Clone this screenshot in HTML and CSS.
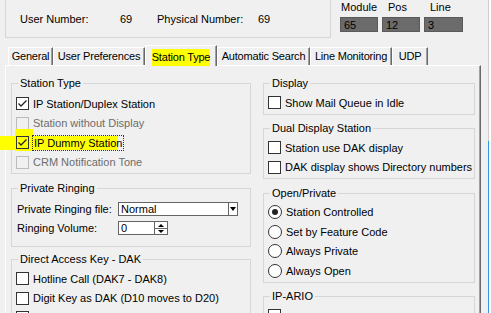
FILE: index.html
```html
<!DOCTYPE html>
<html>
<head>
<meta charset="utf-8">
<title>Station Type</title>
<link rel="stylesheet" href="styles.css">
</head>
<body>
<div class="window">

  <div class="head">
    <div class="ident">
      <span class="ident-lbl">User Number:</span><span class="ident-val">69</span>
      <span class="ident-lbl wide">Physical Number:</span><span class="ident-val">69</span>
    </div>
    <div class="slot">
      <div class="slot-col"><span class="slot-lbl first">Module</span><div class="slot-val">65</div></div>
      <div class="slot-col"><span class="slot-lbl">Pos</span><div class="slot-val">12</div></div>
      <div class="slot-col last"><span class="slot-lbl">Line</span><div class="slot-val">3</div></div>
    </div>
  </div>

  <div class="tabs">
    <div class="tab t-general">General</div>
    <div class="tab t-prefs">User Preferences</div>
    <div class="tab t-type active"><span class="marker">Station Type</span></div>
    <div class="tab t-search">Automatic Search</div>
    <div class="tab t-mon">Line Monitoring</div>
    <div class="tab t-udp">UDP</div>
  </div>

  <div class="panel">
    <div class="col col-left">

      <fieldset class="group g-station">
        <legend>Station Type</legend>
        <div class="row"><span class="check on"><svg viewBox="0 0 11 11"><polyline points="1.5,5.5 4,8 9.5,2.5"/></svg></span>IP Station/Duplex Station</div>
        <div class="row off"><span class="check"></span>Station without Display</div>
        <div class="row hl">
          <span class="hl-a"></span><span class="hl-b"></span>
          <span class="check on clear"><svg viewBox="0 0 11 11"><polyline points="1.5,5.5 4,8 9.5,2.5"/></svg></span><span class="focus">IP Dummy Station</span>
        </div>
        <div class="row off"><span class="check"></span>CRM Notification Tone</div>
      </fieldset>

      <fieldset class="group g-ring">
        <legend>Private Ringing</legend>
        <div class="row">
          <span class="field-lbl">Private Ringing file:</span>
          <div class="combo"><span class="combo-text">Normal</span><span class="combo-btn"><i class="tri down"></i></span></div>
        </div>
        <div class="row">
          <span class="field-lbl">Ringing Volume:</span>
          <div class="spin"><span class="spin-text">0</span><span class="spin-btns"><span class="spin-b"><i class="tri up"></i></span><span class="spin-b"><i class="tri down"></i></span></span></div>
        </div>
      </fieldset>

      <fieldset class="group g-dak">
        <legend>Direct Access Key - DAK</legend>
        <div class="row"><span class="check"></span>Hotline Call (DAK7 - DAK8)</div>
        <div class="row"><span class="check"></span>Digit Key as DAK (D10 moves to D20)</div>
        <div class="row"><span class="check"></span></div>
      </fieldset>

    </div>
    <div class="col col-right">

      <fieldset class="group">
        <legend>Display</legend>
        <div class="row"><span class="check"></span>Show Mail Queue in Idle</div>
      </fieldset>

      <fieldset class="group">
        <legend>Dual Display Station</legend>
        <div class="row"><span class="check"></span>Station use DAK display</div>
        <div class="row"><span class="check"></span>DAK display shows Directory numbers</div>
      </fieldset>

      <fieldset class="group">
        <legend>Open/Private</legend>
        <div class="row"><span class="radio on"></span>Station Controlled</div>
        <div class="row"><span class="radio"></span>Set by Feature Code</div>
        <div class="row"><span class="radio"></span>Always Private</div>
        <div class="row"><span class="radio"></span>Always Open</div>
      </fieldset>

      <fieldset class="group">
        <legend>IP-ARIO</legend>
        <div class="row"><span class="check"></span></div>
      </fieldset>

    </div>
  </div>

</div>
</body>
</html>
```

FILE: styles.css
```css
body {
  margin: 0;
  background: #fff;
  font-family: "Liberation Sans", Arial, sans-serif;
  font-size: 11px;
  color: #000;
}

.window {
  width: 488px;
  height: 313px;
  overflow: hidden;
  background: #f0f0f0;
  border-right: 1px solid #3c9be0;
  border-image: linear-gradient(#cdcdcd 45%, #2f96df 45%) 1;
  border-top: 0;
  border-left: 0;
  border-bottom: 0;
}

/* header */
.head {
  display: flex;
  height: 45px;
}

.ident {
  display: flex;
  align-items: center;
  box-sizing: border-box;
  width: 326px;
  height: 38px;
  margin-left: 5px;
  padding-left: 14px;
  border: 1px solid #d6d6d6;
  border-top: 0;
}
.ident-lbl { width: 100px; }
.ident-lbl.wide { width: 101px; }
.ident-val { width: 37px; }

.slot {
  display: flex;
  gap: 4px;
  margin-left: 9px;
  padding-top: 1px;
}
.slot-col { width: 38px; }
.slot-col.last { width: 39px; }
.slot-lbl {
  display: block;
  line-height: 13px;
  padding-left: 6px;
}
.slot-lbl.first { padding-left: 1px; }
.slot-val {
  box-sizing: border-box;
  height: 15px;
  margin-top: 3px;
  padding-left: 3px;
  line-height: 14px;
  background: #6b6b6b;
  border: 1px solid #5a5a5a;
}

/* tabs */
.tabs {
  display: flex;
  align-items: flex-end;
  height: 20px;
  margin-left: 8px;
}
.tab {
  box-sizing: border-box;
  height: 18px;
  line-height: 17px;
  text-align: center;
  white-space: nowrap;
  letter-spacing: -0.2px;
  border-top: 1px solid #fff;
  border-left: 1px solid #fff;
  border-right: 1px solid #696969;
  box-shadow: inset -1px 0 #a0a0a0;
}
.t-general { width: 45px; }
.t-prefs { width: 92px; }
.t-type { width: 72px; }
.t-search { width: 93px; }
.t-mon { width: 82px; }
.t-udp { width: 36px; }

.tab.active {
  position: relative;
  z-index: 1;
  height: 21px;
  margin-bottom: -1px;
  padding-top: 3px;
  background: #f0f0f0;
}
.marker {
  display: inline-block;
  line-height: 17px;
  background: #ffff00;
}

/* panel */
.panel {
  display: flex;
  gap: 12px;
  box-sizing: border-box;
  width: 476px;
  height: 260px;
  margin-left: 5px;
  padding: 11px 0 0 5px;
  border-top: 1px solid #fff;
  border-left: 1px solid #fff;
  border-right: 1px solid #696969;
  box-shadow: inset -1px 0 #a0a0a0;
}
.col { display: flex; flex-direction: column; }
.col-left { width: 240px; }
.col-right { width: 212px; gap: 7.5px; }

.group {
  margin: 0;
  min-width: 0;
  padding: 3px 0 1px 4px;
  border: 1px solid #d6d6d6;
}
.group legend {
  margin-left: 2px;
  padding: 0 2px;
  line-height: 13px;
}
.g-station { padding-top: 4px; }
.g-ring { margin-top: 8px; padding-top: 4px; padding-bottom: 8px; }
.g-dak { margin-top: 6px; }

.row {
  position: relative;
  display: flex;
  align-items: center;
  gap: 4px;
  height: 19.5px;
  white-space: nowrap;
}
.row.off { color: #6d6d6d; }

.check {
  position: relative;
  box-sizing: border-box;
  width: 13px;
  height: 13px;
  flex: none;
  background: #fff;
  border: 1px solid #333;
}
.row.off .check {
  background: transparent;
  border-color: #bcbcbc;
}
.check svg {
  display: block;
  width: 11px;
  height: 11px;
  fill: none;
  stroke: #222;
  stroke-width: 1.3;
}
.check.clear { background: transparent; }

.radio {
  position: relative;
  box-sizing: border-box;
  width: 14px;
  height: 14px;
  flex: none;
  background: #fff;
  border: 1px solid #333;
  border-radius: 50%;
}
.radio.on::after {
  content: "";
  position: absolute;
  left: 3px;
  top: 3px;
  width: 6px;
  height: 6px;
  border-radius: 50%;
  background: #222;
}

/* yellow marker on the dummy station row */
.hl-a, .hl-b {
  position: absolute;
  background: #ffff00;
}
.hl-a { left: -16px; top: 3px; width: 118px; height: 14px; }
.hl-b { left: -1px; top: -4px; width: 18px; height: 22px; }
.hl .check, .hl .focus { position: relative; }
.focus {
  outline: 1px dotted #333;
  outline-offset: 0;
  padding: 0 1px;
  line-height: 14px;
}

/* form fields */
.field-lbl {
  width: 97px;
  padding-left: 1px;
}
.combo, .spin {
  display: flex;
  box-sizing: border-box;
  height: 14px;
  background: #fff;
  border: 1px solid #646464;
}
.combo { width: 120px; }
.combo-text, .spin-text {
  flex: 1;
  padding-left: 2px;
  line-height: 12px;
}
.combo-btn {
  display: flex;
  align-items: center;
  justify-content: center;
  width: 8px;
  border-left: 1px solid #646464;
}
.spin { width: 50px; }
.spin-btns {
  display: flex;
  flex-direction: column;
  width: 12px;
  border-left: 1px solid #646464;
}
.spin-b {
  display: flex;
  flex: 1;
  align-items: center;
  justify-content: center;
}
.spin-b + .spin-b { border-top: 1px solid #646464; }

.tri {
  width: 0;
  height: 0;
  border-left: 3px solid transparent;
  border-right: 3px solid transparent;
}
.tri.down { border-top: 4px solid #000; }
.tri.up { border-bottom: 4px solid #000; }
.spin .tri.down { border-top-width: 3px; }
.spin .tri.up { border-bottom-width: 3px; }
```
